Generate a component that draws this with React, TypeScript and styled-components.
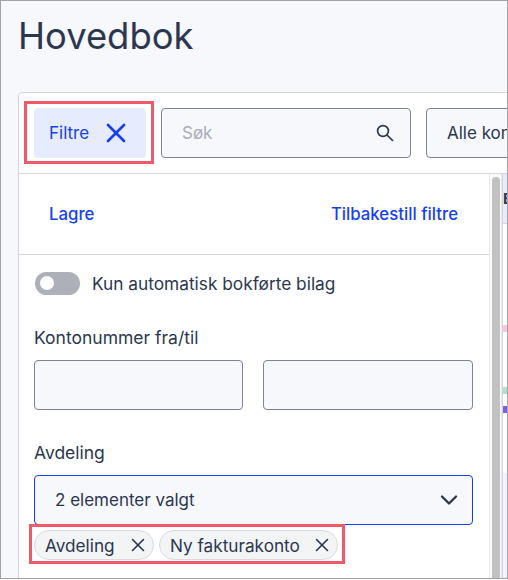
import styled, { createGlobalStyle } from 'styled-components';
import { X, ChevronDown } from 'lucide-react';

const GlobalStyle = createGlobalStyle`
  html, body {
    margin: 0;
    padding: 0;
    background: #fff;
  }
  * {
    box-sizing: border-box;
  }
`;

const Frame = styled.div`
  width: 508px;
  height: 579px;
  overflow: hidden;
  border: 1px solid #a3a3a6;
  background: #f7f8fc;
  padding: 0 0 0 17px;
  font-family: Inter, 'Liberation Sans', sans-serif;
  color: #2b3750;
`;

const Title = styled.h1`
  margin: 0;
  padding-top: 13px;
  height: 91px;
  font-size: 36.4px;
  line-height: 44px;
  font-weight: 400;
`;

const Card = styled.section`
  width: 520px;
  height: 500px;
  background: #fff;
  border: 1px solid #d5d6dc;
  border-radius: 4px 0 0 0;
`;

const Toolbar = styled.div`
  display: flex;
  align-items: center;
  gap: 15px;
  height: 81px;
  padding-left: 15px;
  border-bottom: 1px solid #d5d6dc;
`;

const Highlight = styled.div`
  position: relative;
  flex: none;
  width: fit-content;
  &::after {
    content: '';
    position: absolute;
    top: ${p => p.$top}px;
    bottom: ${p => p.$bottom}px;
    left: ${p => p.$left}px;
    right: ${p => p.$right}px;
    border: 3px solid #ee5a6a;
    pointer-events: none;
  }
`;

const FilterButton = styled.button`
  display: flex;
  align-items: center;
  gap: 11px;
  width: 112px;
  height: 50px;
  padding: 0 0 0 15px;
  border: 0;
  border-radius: 4px;
  background: #e6ebfd;
  color: #1741f0;
  font: 400 17px Inter, sans-serif;
`;

const SearchBox = styled.div`
  display: flex;
  align-items: center;
  justify-content: space-between;
  flex: none;
  width: 250px;
  height: 50px;
  padding: 0 16px 0 20px;
  background: #f7f8fc;
  border: 1px solid #7f8397;
  border-radius: 4px;
  font-size: 17px;
  color: #a9adb8;
`;

const SelectBox = styled.div`
  display: flex;
  align-items: center;
  flex: none;
  width: 180px;
  height: 50px;
  padding-left: 20px;
  background: #f7f8fc;
  border: 1px solid #7f8397;
  border-radius: 4px;
  font-size: 17px;
  white-space: nowrap;
`;

const Body = styled.div`
  display: flex;
  height: 420px;
`;

const FilterPanel = styled.div`
  flex: none;
  width: 470px;
`;

const ActionRow = styled.div`
  display: flex;
  justify-content: space-between;
  align-items: center;
  height: 81px;
  padding: 0 31px 0 30px;
  border-bottom: 1px solid #d5d6dc;
`;

const LinkButton = styled.a`
  color: #1741f0;
  font-size: 16.8px;
  font-weight: 500;
`;

const Fields = styled.div`
  padding: 16px 16px 0 15px;
`;

const ToggleRow = styled.div`
  display: flex;
  align-items: center;
  gap: 12px;
  height: 24px;
  font-size: 17.3px;
`;

const Toggle = styled.span`
  display: flex;
  align-items: center;
  width: 45px;
  height: 23px;
  margin-left: 1px;
  padding-left: 5px;
  border-radius: 12px;
  background: #adb0b9;
  &::before {
    content: '';
    width: 14px;
    height: 14px;
    border-radius: 50%;
    background: #fff;
  }
`;

const FieldLabel = styled.div`
  margin-top: ${p => p.$gap}px;
  height: 18px;
  line-height: 18px;
  font-size: 17.5px;
`;

const InputPair = styled.div`
  display: grid;
  grid-template-columns: 209px 210px;
  gap: 20px;
  margin-top: 13px;
`;

const TextInput = styled.div`
  height: 50px;
  background: #f7f8fc;
  border: 1px solid #7f8397;
  border-radius: 4px;
`;

const Dropdown = styled.div`
  display: flex;
  align-items: center;
  justify-content: space-between;
  width: 439px;
  height: 50px;
  margin-top: 13px;
  padding: 0 9px 0 20px;
  background: #f7f8fc;
  border: 1px solid #1741f0;
  border-radius: 4px;
  font-size: 17px;
`;

const ChipRow = styled.div`
  display: flex;
  gap: 5px;
  margin-top: 5px;
`;

const Chip = styled.span`
  display: flex;
  align-items: center;
  justify-content: space-between;
  width: ${p => p.$width}px;
  height: 30px;
  padding: 0 4px 0 10px;
  background: #f3f4f6;
  border: 1px solid #d9dade;
  border-radius: 15px;
  font-size: 17.2px;
`;

const ScrollTrack = styled.div`
  flex: none;
  width: 13px;
  padding: 3px 2px 0 2px;
  background: #fafafa;
  border-left: 1px solid #e8e8e8;
  border-right: 1px solid #e8e8e8;
`;

const ScrollThumb = styled.div`
  width: 8px;
  height: 100%;
  border-radius: 4px 4px 0 0;
  background: #c1c1c1;
`;

const TableStrip = styled.div`
  flex: none;
  width: 30px;
  border-left: 1px solid #d5d6dc;
  display: flex;
  flex-direction: column;
`;

const HeaderCell = styled.div`
  display: flex;
  align-items: center;
  height: 50px;
  background: #e6ebfd;
  border-bottom: 1px solid #d5d6dc;
  font-size: 15px;
  font-weight: 700;
  overflow: hidden;
`;

const RowTag = styled.div`
  width: 8px;
  height: 7px;
  margin-top: ${p => p.$gap}px;
  background: ${p => p.$color};
`;

const StripFill = styled.div`
  flex: 1;
  margin-top: 60px;
  background: #f3f3fb;
`;

const SearchIcon = () => (
  <svg width="18" height="18" viewBox="0 0 18 18" fill="none" stroke="#2b3750" strokeWidth="1.7">
    <circle cx="7" cy="7" r="5.4" />
    <line x1="11" y1="11" x2="17" y2="17" />
  </svg>
);

const App = () => (
  <>
    <GlobalStyle />
    <Frame>
      <Title>Hovedbok</Title>
      <Card>
        <Toolbar>
          <Highlight $top={-7} $bottom={-6} $left={-10} $right={-8}>
            <FilterButton>
              Filtre
              <X size={32} strokeWidth={2} />
            </FilterButton>
          </Highlight>
          <SearchBox>
            Søk
            <SearchIcon />
          </SearchBox>
          <SelectBox>Alle kontoer</SelectBox>
        </Toolbar>
        <Body>
          <FilterPanel>
            <ActionRow>
              <LinkButton>Lagre</LinkButton>
              <LinkButton>Tilbakestill filtre</LinkButton>
            </ActionRow>
            <Fields>
              <ToggleRow>
                <Toggle />
                Kun automatisk bokførte bilag
              </ToggleRow>
              <FieldLabel $gap={34}>Kontonummer fra/til</FieldLabel>
              <InputPair>
                <TextInput />
                <TextInput />
              </InputPair>
              <FieldLabel $gap={34}>Avdeling</FieldLabel>
              <Dropdown>
                2 elementer valgt
                <ChevronDown size={28} strokeWidth={2} />
              </Dropdown>
              <Highlight $top={-6} $bottom={-4} $left={-5} $right={-7}>
                <ChipRow>
                  <Chip $width={120}>
                    Avdeling
                    <X size={22} strokeWidth={1.75} />
                  </Chip>
                  <Chip $width={179}>
                    Ny fakturakonto
                    <X size={22} strokeWidth={1.75} />
                  </Chip>
                </ChipRow>
              </Highlight>
            </Fields>
          </FilterPanel>
          <ScrollTrack>
            <ScrollThumb />
          </ScrollTrack>
          <TableStrip>
            <HeaderCell>Bilag</HeaderCell>
            <RowTag $gap={101} $color="#f9c3e2" />
            <RowTag $gap={55} $color="#a9e4c8" />
            <RowTag $gap={12} $color="#7f5cf6" />
            <StripFill />
          </TableStrip>
        </Body>
      </Card>
    </Frame>
  </>
);

export default App;
